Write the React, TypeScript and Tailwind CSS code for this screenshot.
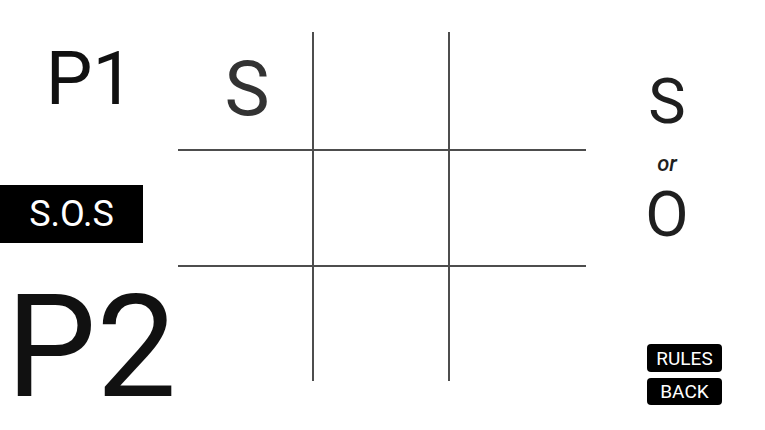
import React from "react";

export default function App() {
  const cells = Array.from({ length: 9 }, (_, i) => i);
  return (
    <div
      className="w-[765px] h-[430px] bg-white flex overflow-hidden"
      style={{ fontFamily: "Roboto, 'Liberation Sans', sans-serif" }}
    >
      {/* Left column */}
      <div className="w-[178px] flex flex-col shrink-0">
        <div className="mt-[42px] h-[74px] text-[74px] leading-none text-center text-[#111] pl-[2px]">P1</div>
        <div className="mt-[69px] w-[143px] h-[58px] bg-black text-white text-[36px] leading-none flex items-center justify-center">
          S.O.S
        </div>
        <div className="mt-[33px] h-[110px] text-[143px] leading-none text-[#111] pl-[6px]">P2</div>
      </div>

      {/* Board */}
      <div className="mt-[32px] grid grid-cols-[136px_136px_136px] grid-rows-[119px_116px_114px] h-[349px] shrink-0">
        {cells.map((i) => {
          const col = i % 3;
          const row = Math.floor(i / 3);
          const cls =
            (col < 2 ? "border-r-2 " : "") +
            (row < 2 ? "border-b-2 " : "") +
            "border-[#4d4d4d] flex items-center justify-center";
          return (
            <div key={i} className={cls}>
              {i === 0 && (
                <span className="text-[76px] leading-none text-[#333] ml-[4px] -mt-[3px]">S</span>
              )}
            </div>
          );
        })}
      </div>

      {/* Right column */}
      <div className="flex-1 flex flex-col">
        <div className="ml-[61px] w-[40px] flex flex-col items-center text-[#1f1f1f]">
          <div className="mt-[70px] text-[63px] leading-none">S</div>
          <div className="mt-[20px] text-[22px] leading-none italic font-medium">or</div>
          <div className="mt-[8px] text-[63px] leading-none">O</div>
        </div>
        <div className="ml-[61px] mt-[98px] flex flex-col gap-[6px]">
          <div className="w-[75px] h-[28px] bg-black rounded-[4px] text-white text-[19px] leading-none flex items-center justify-center">
            RULES
          </div>
          <div className="w-[75px] h-[27px] bg-black rounded-[4px] text-white text-[19px] leading-none flex items-center justify-center">
            BACK
          </div>
        </div>
      </div>
    </div>
  );
}
